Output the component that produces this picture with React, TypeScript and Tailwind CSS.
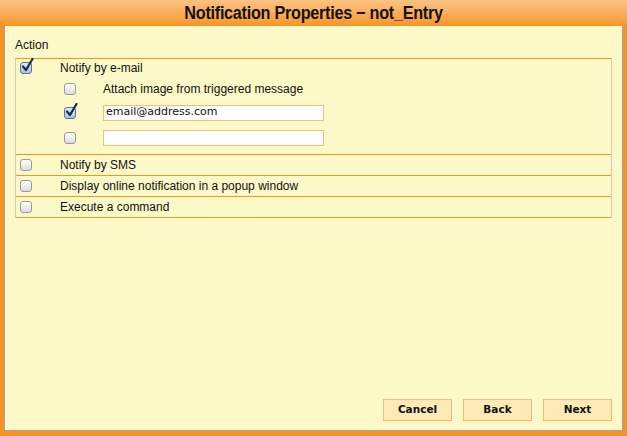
import React from 'react'

function Check({ checked = false }: { checked?: boolean }) {
  return (
    <span className="relative inline-block h-[12px] w-[12px]">
      <span
        className={
          checked
            ? 'absolute inset-0 rounded-[3px] border border-[#5d6f8c] bg-gradient-to-b from-[#dfeaf8] to-[#a9c3e3]'
            : 'absolute inset-0 rounded-[3px] border border-[#9a9a9a] bg-gradient-to-b from-[#ffffff] to-[#dcdcdc]'
        }
      />
      {checked && (
        <svg
          className="absolute left-[1px] top-[-4px]"
          width="13"
          height="14"
          viewBox="0 0 13 14"
        >
          <path
            d="M2 8.5 L5 12 L11.5 1"
            fill="none"
            stroke="#1c2a4a"
            strokeWidth="2.2"
            strokeLinecap="round"
            strokeLinejoin="round"
          />
        </svg>
      )}
    </span>
  )
}

function Row({ label }: { label: string }) {
  return (
    <div className="flex h-[21px] items-center border-b border-[#f7941d]">
      <div className="flex w-[44px] pl-[4px]">
        <Check />
      </div>
      <span>{label}</span>
    </div>
  )
}

function Btn({ children }: { children: React.ReactNode }) {
  return (
    <button
      type="button"
      className="h-[22px] w-[69px] border border-[#fdb96e] bg-[#fee9b7] text-[10.5px] font-bold text-[#111]"
      style={{ fontFamily: '"DejaVu Sans", Verdana, sans-serif' }}
    >
      {children}
    </button>
  )
}

export default function App() {
  return (
    <div
      className="flex h-[436px] w-[627px] flex-col bg-[#f7941d] text-[12px] text-[#111]"
      style={{ fontFamily: '"Liberation Sans", Arial, sans-serif' }}
    >
      <div className="flex h-[26px] items-center justify-center bg-gradient-to-b from-[#fbc382] to-[#f7961f]">
        <h1
          className="scale-x-[0.9] text-[18px] font-bold leading-none tracking-[-0.3px] text-[#111]"
          style={{ fontFamily: '"Liberation Sans", Arial, sans-serif' }}
        >
          Notification Properties − not_Entry
        </h1>
      </div>

      <div className="mx-[4px] mb-[5px] flex flex-1 flex-col border-x border-b border-[#a3a3b6] bg-[#fef9c8] px-[10px] pt-[12px] pb-[9px]">
        <div className="h-[14px] leading-[14px]">Action</div>

        <div className="mt-[6px] border-x border-t border-x-[#d2cdb0] border-t-[#f7941d]">
          <div className="border-b border-[#f7941d] pb-[3px]">
            <div className="flex h-[18px] items-center">
              <div className="flex w-[44px] pl-[4px]">
                <Check checked />
              </div>
              <span>Notify by e-mail</span>
            </div>
            <div className="flex h-[23px] items-center pl-[44px]">
              <div className="flex w-[43px] pl-[4px]">
                <Check />
              </div>
              <span>Attach image from triggered message</span>
            </div>
            <div className="flex h-[25px] items-center pl-[44px]">
              <div className="flex w-[43px] pl-[4px]">
                <Check checked />
              </div>
              <input
                readOnly
                value="email@address.com"
                className="h-[16px] w-[221px] border border-[#fdb96e] bg-white px-[2px] text-[11px] text-[#111] outline-none"
                style={{ fontFamily: '"DejaVu Sans", Verdana, sans-serif' }}
              />
            </div>
            <div className="flex h-[26px] items-center pl-[44px]">
              <div className="flex w-[43px] pl-[4px]">
                <Check />
              </div>
              <input
                readOnly
                value=""
                className="h-[16px] w-[221px] border border-[#fdb96e] bg-white px-[2px] text-[11px] outline-none"
              />
            </div>
          </div>
          <Row label="Notify by SMS" />
          <Row label="Display online notification in a popup window" />
          <Row label="Execute a command" />
        </div>

        <div className="mt-auto flex justify-end gap-[11px]">
          <Btn>Cancel</Btn>
          <Btn>Back</Btn>
          <Btn>Next</Btn>
        </div>
      </div>
    </div>
  )
}
